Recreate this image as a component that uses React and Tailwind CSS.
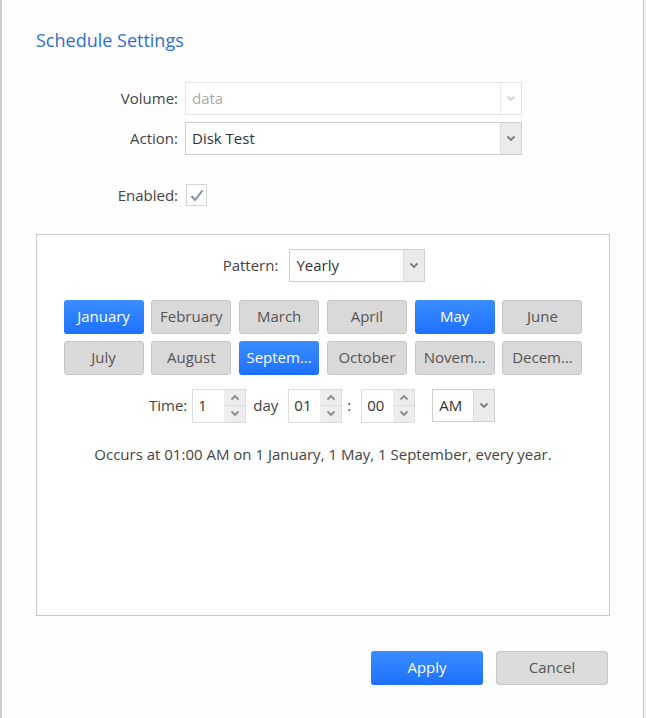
import React from 'react'

const font = { fontFamily: '"Open Sans", "Noto Sans", sans-serif' }

function Chevron({ dir = 'down', className = '' }) {
  return (
    <svg width="10" height="7" viewBox="0 0 10 7" className={className}>
      {dir === 'down' ? (
        <path d="M1.5 1.5 L5 5 L8.5 1.5" fill="none" stroke="currentColor" strokeWidth="1.8" />
      ) : (
        <path d="M1.5 5.5 L5 2 L8.5 5.5" fill="none" stroke="currentColor" strokeWidth="1.8" />
      )}
    </svg>
  )
}

function Select({ value, width, disabled }) {
  return (
    <div
      className={`flex h-[33px] border bg-white ${disabled ? 'border-[#e4e4e4]' : 'border-[#cfcfcf]'}`}
      style={{ width }}
    >
      <div className={`flex-1 flex items-center pl-[6px] text-[15px] ${disabled ? 'text-[#a9a9a9]' : 'text-[#333]'}`}>
        {value}
      </div>
      <div
        className={`w-[21px] flex items-center justify-center border-l ${
          disabled ? 'border-[#e8e8e8] bg-white text-[#d4d4d4]' : 'border-[#dcdcdc] bg-[#ebebeb] text-[#7a7a7a]'
        }`}
      >
        <Chevron />
      </div>
    </div>
  )
}

function Spinner({ value }) {
  return (
    <div className="flex h-[34px] w-[54px] border border-[#dcdcdc] bg-white">
      <div className="flex-1 flex items-center pl-[5px] text-[15px] text-[#333]">{value}</div>
      <div className="w-[21px] flex flex-col bg-[#ededed] text-[#8a8a8a]">
        <div className="flex-1 flex items-center justify-center border-b border-[#dcdcdc]">
          <Chevron dir="up" />
        </div>
        <div className="flex-1 flex items-center justify-center">
          <Chevron />
        </div>
      </div>
    </div>
  )
}

const months = [
  ['January', true],
  ['February', false],
  ['March', false],
  ['April', false],
  ['May', true],
  ['June', false],
  ['July', false],
  ['August', false],
  ['Septem...', true],
  ['October', false],
  ['Novem...', false],
  ['Decem...', false],
]

export default function App() {
  return (
    <div className="flex w-[647px] h-[718px] bg-[#f4f4f4]" style={font}>
      <div className="w-[644px] h-full bg-[#fefefe] border-l-2 border-[#cdcdcd] border-r border-r-[#c8c8c8] flex flex-col">
        <div className="pt-[28px] pl-[34px] text-[18px] leading-[24px] text-[#2f6fd6]">Schedule Settings</div>

        <div className="mt-[30px] flex flex-col gap-[7px]">
          <div className="flex items-center">
            <div className="w-[183px] pr-[7px] text-right text-[15px] text-[#444]">Volume:</div>
            <Select value="data" width={337} disabled />
          </div>
          <div className="flex items-center">
            <div className="w-[183px] pr-[7px] text-right text-[15px] text-[#444]">Action:</div>
            <Select value="Disk Test" width={337} />
          </div>
        </div>

        <div className="mt-[29px] flex items-center">
          <div className="w-[184px] pr-[8px] text-right text-[15px] text-[#444]">Enabled:</div>
          <div className="w-[21px] h-[22px] border border-[#d6d6d6] bg-white flex items-center justify-center">
            <svg width="14" height="13" viewBox="0 0 14 13">
              <path d="M1.5 7 L5 11 L12.5 1.5" fill="none" stroke="#7e8fae" strokeWidth="2" />
            </svg>
          </div>
        </div>

        <div className="mt-[27px] ml-[34px] w-[574px] h-[382px] border border-[#c9c9c9] bg-white flex flex-col">
          <div className="mt-[14px] flex items-center justify-center gap-[11px] pl-[2px]">
            <div className="text-[15px] text-[#444]">Pattern:</div>
            <Select value="Yearly" width={136} />
          </div>

          <div className="mt-[18px] grid grid-cols-[repeat(6,80px)] gap-x-[7.8px] gap-y-[7px] justify-center">
            {months.map(([m, on]) => (
              <div
                key={m}
                className={`h-[34px] rounded-[3px] flex items-center justify-center text-[15px] ${
                  on
                    ? 'bg-gradient-to-b from-[#3a8dff] to-[#1d70ff] text-white'
                    : 'bg-[#d9d9d9] border border-[#c6c6c6] text-[#555]'
                }`}
              >
                {m}
              </div>
            ))}
          </div>

          <div className="mt-[14px] flex items-center text-[15px] text-[#444] pl-[112px]">
            <span className="mr-[5px]">Time:</span>
            <Spinner value="1" />
            <span className="ml-[7px] mr-[10px]">day</span>
            <Spinner value="01" />
            <span className="ml-[5px] mr-[10px]">:</span>
            <Spinner value="00" />
            <div className="ml-[17px]">
              <Select value="AM" width={63} />
            </div>
          </div>

          <div className="mt-[20px] text-center text-[15px] text-[#444]">
            Occurs at 01:00 AM on 1 January, 1 May, 1 September, every year.
          </div>
        </div>

        <div className="mt-[35px] flex justify-end gap-[13px] pr-[35px]">
          <button className="w-[112px] h-[34px] rounded-[3px] bg-gradient-to-b from-[#3a8dff] to-[#1d70ff] text-white text-[15px]">
            Apply
          </button>
          <button className="w-[112px] h-[34px] rounded-[3px] bg-[#dcdcdc] border border-[#c8c8c8] text-[#555] text-[15px]">
            Cancel
          </button>
        </div>
      </div>
    </div>
  )
}
